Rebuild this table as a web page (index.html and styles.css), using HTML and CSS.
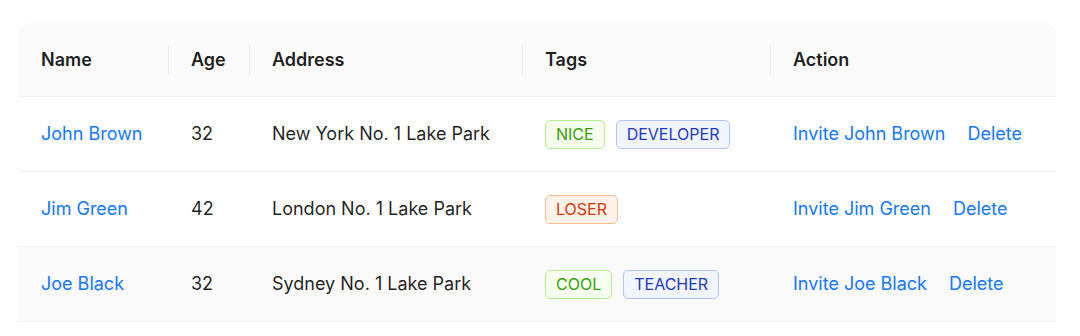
FILE: index.html
```html
<!DOCTYPE html>
<html lang="en">
<head>
<meta charset="utf-8">
<title>Table</title>
<link rel="stylesheet" href="styles.css">
</head>
<body>
<div class="page">
  <table class="table">
    <colgroup>
      <col class="c-name">
      <col class="c-age">
      <col class="c-addr">
      <col class="c-tags">
      <col class="c-action">
    </colgroup>
    <thead>
      <tr>
        <th class="sep">Name</th>
        <th class="sep">Age</th>
        <th class="sep">Address</th>
        <th class="sep">Tags</th>
        <th class="last">Action</th>
      </tr>
    </thead>
    <tbody>
      <tr>
        <td><a class="link">John Brown</a></td>
        <td>32</td>
        <td>New York No. 1 Lake Park</td>
        <td><div class="tags"><span class="tag green">NICE</span><span class="tag geekblue">DEVELOPER</span></div></td>
        <td><div class="actions"><a class="link">Invite John Brown</a><a class="link">Delete</a></div></td>
      </tr>
      <tr>
        <td><a class="link">Jim Green</a></td>
        <td>42</td>
        <td>London No. 1 Lake Park</td>
        <td><div class="tags"><span class="tag volcano">LOSER</span></div></td>
        <td><div class="actions"><a class="link">Invite Jim Green</a><a class="link">Delete</a></div></td>
      </tr>
      <tr class="hover">
        <td><a class="link">Joe Black</a></td>
        <td>32</td>
        <td>Sydney No. 1 Lake Park</td>
        <td><div class="tags"><span class="tag green">COOL</span><span class="tag geekblue">TEACHER</span></div></td>
        <td><div class="actions"><a class="link">Invite Joe Black</a><a class="link">Delete</a></div></td>
      </tr>
    </tbody>
  </table>
</div>
</body>
</html>
```

FILE: styles.css
```css
* { box-sizing: border-box; }
html, body { margin: 0; padding: 0; background: #ffffff; }
body {
  font-family: Inter, "Noto Sans", "Liberation Sans", sans-serif;
  color: rgba(0, 0, 0, 0.88);
}
.page {
  padding: 23px 24px 0 19px;
}
.table {
  width: 1037px;
  border-collapse: separate;
  border-spacing: 0;
  table-layout: fixed;
  font-size: 18px;
  line-height: 30px;
}
.c-name { width: 150px; }
.c-age { width: 81px; }
.c-addr { width: 273px; }
.c-tags { width: 248px; }
.c-action { width: 285px; }

th {
  background-color: #fafafa;
  font-weight: 600;
  text-align: left;
  padding: 21px 22px;
  height: 74px;
  border-bottom: 1px solid #f0f0f0;
}
th:first-child { border-top-left-radius: 11px; }
th:last-child { border-top-right-radius: 11px; }
th.sep {
  background-image: linear-gradient(#ebebeb, #ebebeb);
  background-repeat: no-repeat;
  background-size: 1px 30px;
  background-position: right center;
}
td {
  padding: 22px 22px;
  height: 75px;
  border-bottom: 1px solid #f0f0f0;
  white-space: nowrap;
}
tr.hover td { background: #fafafa; }

.link {
  color: #1677ff;
  text-decoration: none;
  cursor: pointer;
}
.actions {
  display: flex;
  gap: 22px;
}
.tags {
  display: flex;
  align-items: center;
  gap: 11px;
  height: 30px;
}
.tag {
  font-size: 16px;
  line-height: 27px;
  padding: 0 10px;
  border: 1px solid;
  border-radius: 5px;
}
.green { color: #389e0d; background: #f6ffed; border-color: #b7eb8f; }
.geekblue { color: #1d39c4; background: #f0f5ff; border-color: #adc6ff; }
.volcano { color: #d4380d; background: #fff2e8; border-color: #ffbb96; }
```
